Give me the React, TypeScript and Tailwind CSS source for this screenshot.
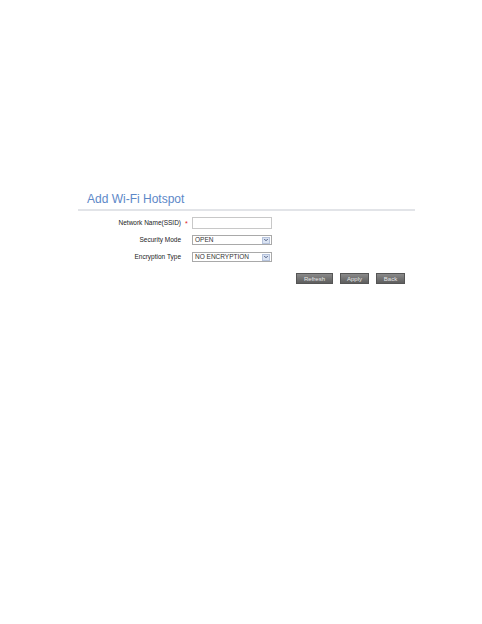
import { ChevronDown } from 'lucide-react'

const rows = [
  { label: 'Network Name(SSID)', required: true, kind: 'input', value: '' },
  { label: 'Security Mode', required: false, kind: 'select', value: 'OPEN' },
  { label: 'Encryption Type', required: false, kind: 'select', value: 'NO ENCRYPTION' },
]

function SelectBox({ value }: { value: string }) {
  return (
    <div className="flex items-center justify-between w-[80px] h-[10px] border border-[#a9a9a9] bg-white pl-[2px] pr-[1px]">
      <span className="text-[6.5px] leading-none text-[#333]">{value}</span>
      <span className="flex items-center justify-center w-[8px] h-[7px] bg-[#dbe4f3] border border-[#b6c3dc]">
        <ChevronDown size={6} strokeWidth={4} className="text-[#4a5a80]" />
      </span>
    </div>
  )
}

export default function App() {
  return (
    <div className="min-h-[624px] bg-white font-['Liberation_Sans',Arial,sans-serif] pt-[191px]">
      <div className="ml-[78px] w-[337px]">
        {/* Title */}
        <div className="pl-[9px] h-[17px] text-[12px] leading-[17px] text-[#5d88c8]">Add Wi-Fi Hotspot</div>
        <div className="h-[2px] bg-[#e2e4e8] mt-[1px]" />

        {/* Form */}
        <div className="mt-[6px] flex flex-col gap-[5px]">
          {rows.map((r) => (
            <div key={r.label} className="flex items-center h-[12px]">
              <div className="w-[103px] text-right text-[6.5px] leading-none text-[#222]">{r.label}</div>
              <div className="w-[11px] pl-[4px] text-[7px] leading-none text-[#d22]">{r.required ? '*' : ''}</div>
              {r.kind === 'input' ? (
                <div className="w-[80px] h-[12px] border border-[#c8c8c8] bg-white" />
              ) : (
                <SelectBox value={r.value} />
              )}
            </div>
          ))}
        </div>

        {/* Buttons */}
        <div className="mt-[10px] flex justify-end gap-[7px] pr-[10px]">
          {['Refresh', 'Apply', 'Back'].map((b) => (
            <button
              key={b}
              className={`h-[11px] ${b === 'Refresh' ? 'w-[37px]' : 'w-[29px]'} bg-gradient-to-b from-[#8a8a8a] to-[#5e5e5e] border border-[#555] text-[6px] leading-none text-[#e8e8e8]`}
            >
              {b}
            </button>
          ))}
        </div>
      </div>
    </div>
  )
}
